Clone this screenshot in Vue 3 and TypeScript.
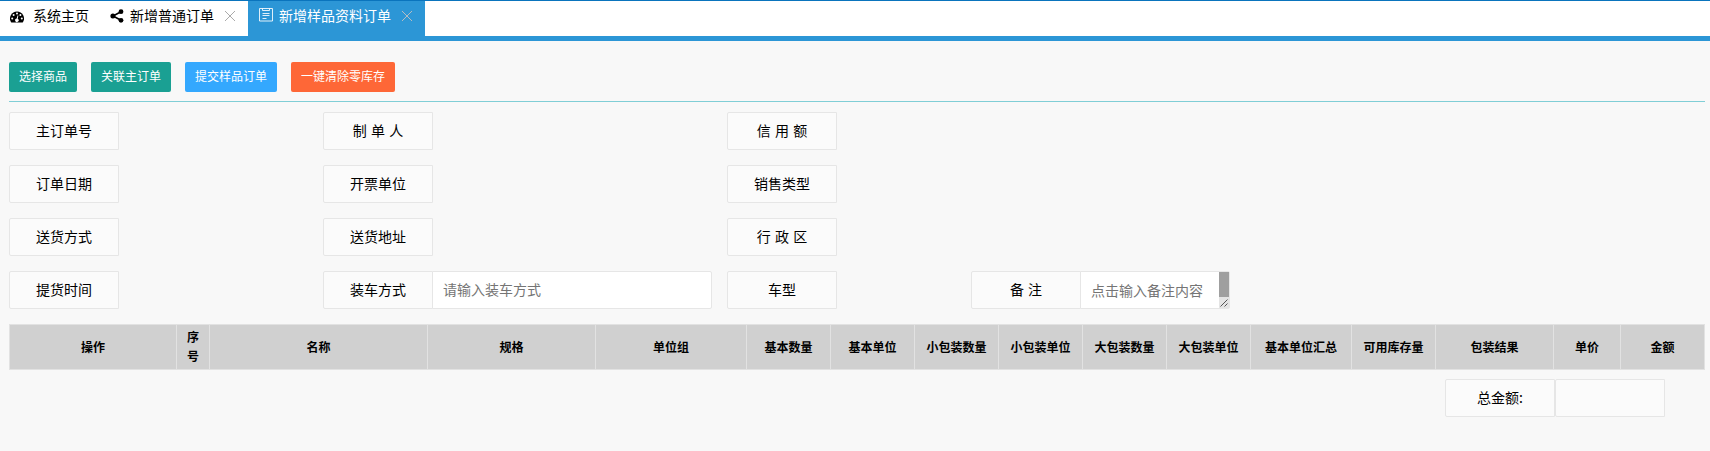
<script setup lang="ts">
interface Field {
  label: string
  kind?: 'input' | 'textarea'
  placeholder?: string
}

const buttons = [
  { text: '选择商品', tone: 'green' },
  { text: '关联主订单', tone: 'green' },
  { text: '提交样品订单', tone: 'blue' },
  { text: '一键清除零库存', tone: 'orange' },
]

const rows: Field[][] = [
  [{ label: '主订单号' }, { label: '制 单 人' }, { label: '信 用 额' }],
  [{ label: '订单日期' }, { label: '开票单位' }, { label: '销售类型' }],
  [{ label: '送货方式' }, { label: '送货地址' }, { label: '行 政 区' }],
  [
    { label: '提货时间' },
    { label: '装车方式', kind: 'input', placeholder: '请输入装车方式' },
    { label: '车型' },
    { label: '备 注', kind: 'textarea', placeholder: '点击输入备注内容' },
  ],
]

const columns = [
  { title: '操作', width: 167 },
  { title: '序号', width: 33 },
  { title: '名称', width: 218 },
  { title: '规格', width: 168 },
  { title: '单位组', width: 151 },
  { title: '基本数量', width: 84 },
  { title: '基本单位', width: 84 },
  { title: '小包装数量', width: 84 },
  { title: '小包装单位', width: 84 },
  { title: '大包装数量', width: 84 },
  { title: '大包装单位', width: 84 },
  { title: '基本单位汇总', width: 101 },
  { title: '可用库存量', width: 84 },
  { title: '包装结果', width: 118 },
  { title: '单价', width: 67 },
  { title: '金额', width: 84 },
]
</script>

<template>
  <div class="page">
    <nav class="tabs">
      <div class="tab home">
        <svg class="gauge" width="14" height="12" viewBox="0 0 14 12">
          <path fill="#000" d="M7 .5a7 7 0 0 0-5.9 10.7q.2.3.6.3h10.6q.4 0 .6-.3A7 7 0 0 0 7 .5z" />
          <g fill="#fff">
            <circle cx="2.2" cy="7.6" r="1" />
            <circle cx="3.6" cy="4.1" r="1" />
            <circle cx="7" cy="2.6" r="1" />
            <circle cx="10.4" cy="4.1" r="1" />
            <circle cx="11.8" cy="7.6" r="1" />
            <path d="M7.5 4.4l.9.2-.7 3.2a1.7 1.7 0 1 1-1-.2z" />
          </g>
        </svg>
        <span>系统主页</span>
      </div>
      <div class="tab normal">
        <svg class="share" width="14" height="14" viewBox="0 0 14 14">
          <path d="M11 2.7L3 7l8 4.3" fill="none" stroke="#000" stroke-width="1.6" />
          <circle cx="11" cy="2.7" r="2.4" />
          <circle cx="2.9" cy="7" r="2.5" />
          <circle cx="11" cy="11.3" r="2.4" />
        </svg>
        <span>新增普通订单</span>
        <svg class="close" width="12" height="12" viewBox="0 0 12 12"><path d="M1 1l10 10M11 1L1 11" /></svg>
      </div>
      <div class="tab active">
        <svg class="form-icon" width="14" height="14" viewBox="0 0 14 14">
          <path d="M.5.5h13v12.5H.5zM3.5.5v2h7v-2M3.5 5.5h7M3.5 7.5h7M3.5 10.5h4" fill="none" stroke="#fff" stroke-opacity=".85" />
        </svg>
        <span>新增样品资料订单</span>
        <svg class="close" width="12" height="12" viewBox="0 0 12 12"><path d="M1 1l10 10M11 1L1 11" /></svg>
      </div>
    </nav>

    <main class="content">
      <div class="toolbar">
        <button v-for="b in buttons" :key="b.text" :class="['btn', b.tone]">{{ b.text }}</button>
      </div>

      <form class="form">
        <div v-for="(row, i) in rows" :key="i" class="row">
          <div v-for="f in row" :key="f.label" class="field">
            <label class="label">{{ f.label }}</label>
            <input v-if="f.kind === 'input'" class="text" :placeholder="f.placeholder" />
            <div v-else-if="f.kind === 'textarea'" class="area">
              <span class="hint">{{ f.placeholder }}</span>
              <span class="scroll">
                <span class="track"></span>
                <svg width="10" height="11" viewBox="0 0 10 11">
                  <path d="M1.5 9.5l7-7M5.5 9.5l3-3" stroke="#555" stroke-width="1" fill="none" />
                </svg>
              </span>
            </div>
          </div>
        </div>
      </form>

      <table class="grid">
        <colgroup>
          <col v-for="c in columns" :key="c.title" :style="{ width: c.width + 'px' }" />
        </colgroup>
        <thead>
          <tr>
            <th v-for="c in columns" :key="c.title">{{ c.title }}</th>
          </tr>
        </thead>
      </table>

      <div class="total">
        <span class="label">总金额:</span>
        <span class="label value"></span>
      </div>
    </main>
  </div>
</template>

<style>
body {
  background: #f8f8f8;
}
</style>

<style scoped>
.page {
  height: 451px;
  box-sizing: border-box;
  overflow: hidden;
  border-top: 1px solid #0a74bd;
  background: #f8f8f8;
  color: #000;
  font: 14px/20px "Noto Sans CJK SC", sans-serif;
}
.tabs {
  display: flex;
  height: 40px;
  box-sizing: border-box;
  border-bottom: 5px solid #2c96d6;
  background: #fff;
}
.tab {
  display: flex;
  align-items: flex-start;
  height: 35px;
  box-sizing: border-box;
  padding-top: 4px;
  white-space: nowrap;
}
.tab svg {
  flex: none;
}
.home {
  width: 100px;
  padding-left: 10px;
}
.gauge {
  margin: 6px 9px 0 0;
}
.normal {
  width: 148px;
  padding-left: 10px;
}
.share {
  margin: 4px 6px 0 0;
}
.active {
  width: 177px;
  padding-left: 11px;
  background: #2c96d6;
  color: #fff;
}
.form-icon {
  margin: 3px 6px 0 0;
}
.close {
  margin: 5px 0 0 10px;
  fill: none;
  stroke: #aaa;
}
.active .close {
  stroke: #b5bcc2;
}
.content {
  padding: 21px 5px 0 9px;
}
.toolbar {
  display: flex;
  gap: 14px;
  height: 40px;
  box-sizing: border-box;
  padding-bottom: 9px;
  border-bottom: 1px solid #80ced6;
}
.btn {
  height: 30px;
  padding: 0 10px 2px;
  border: 0;
  border-radius: 2px;
  color: #fff;
  font: 12px/28px "Noto Sans CJK SC", sans-serif;
  white-space: nowrap;
}
.green {
  background: #1aa093;
}
.blue {
  background: #34a8fe;
}
.orange {
  background: #fe6737;
}
.form {
  display: grid;
  gap: 15px;
  padding-top: 10px;
}
.row {
  display: grid;
  grid-template-columns: 314px 404px 244px 259px;
}
.field {
  display: flex;
  height: 38px;
}
.label {
  width: 110px;
  height: 38px;
  box-sizing: border-box;
  border: 1px solid #e6e6e6;
  border-radius: 2px 0 0 2px;
  background: #fbfbfb;
  line-height: 34px;
  text-align: center;
  white-space: pre;
  word-spacing: 1px;
}
.text {
  width: 280px;
  height: 38px;
  box-sizing: border-box;
  margin-left: -1px;
  padding: 0 0 2px 10px;
  border: 1px solid #e6e6e6;
  border-radius: 0 2px 2px 0;
  background: #fff;
  color: #757575;
  font: inherit;
  outline: 0;
}
.text::placeholder {
  color: #757575;
}
.area {
  display: flex;
  justify-content: space-between;
  width: 150px;
  height: 38px;
  box-sizing: border-box;
  margin-left: -1px;
  border: 1px solid #e6e6e6;
  border-radius: 0 2px 2px 0;
  background: #fff;
  color: #757575;
}
.hint {
  padding: 8px 0 0 10px;
  white-space: nowrap;
}
.scroll {
  display: flex;
  flex-direction: column;
  width: 10px;
  background: #e4e4e4;
}
.track {
  height: 25px;
  background: #9f9f9f;
}
.grid {
  width: 1696px;
  margin-top: 15px;
  border-collapse: collapse;
  table-layout: fixed;
}
.grid th {
  height: 45px;
  box-sizing: border-box;
  padding: 2px 9px 4px;
  border: 1px solid #e2e2e2;
  background: #d0d0d0;
  font-size: 12px;
  font-weight: 700;
  line-height: 19px;
  text-align: center;
}
.total {
  display: flex;
  margin: 9px 0 0 1436px;
}
</style>
